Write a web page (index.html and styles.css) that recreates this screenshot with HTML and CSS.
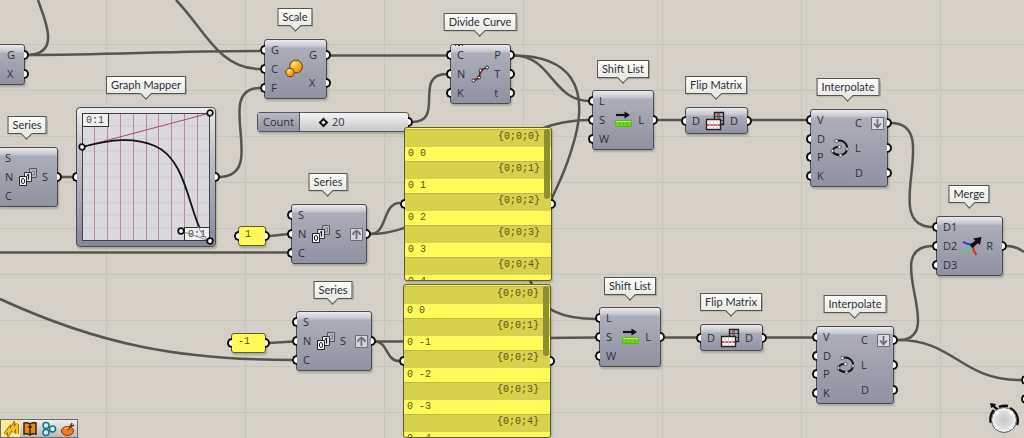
FILE: index.html
```html
<!DOCTYPE html>
<html lang="en">
<head>
<meta charset="utf-8">
<title>Node graph</title>
<link rel="stylesheet" href="styles.css">
</head>
<body>
<svg class="defs" width="0" height="0" aria-hidden="true">
  <defs>
    <symbol id="i-series" viewBox="0 0 20 20">
      <g fill="#b9b9c2" stroke="#55565e"><path d="M11.5 1.5h7v9h-7z"/><path d="M13.500 4h3v4h-3" fill="none" stroke="#777882"/></g>
      <path d="M6.500 5.500h7v9h-7z" fill="#e4e4e8" stroke="#33343a"/><path d="M9 8.500l1.500-1v5" fill="none" stroke="#222" stroke-width="1.200"/>
      <path d="M1.500 9.500h7v9h-7z" fill="#fff" stroke="#222"/><ellipse cx="5" cy="14" rx="1.600" ry="2.600" fill="none" stroke="#222"/>
    </symbol>
    <symbol id="i-scale" viewBox="0 0 20 20">
      <radialGradient id="ball" cx=".35" cy=".3" r=".8"><stop offset="0" stop-color="#fff3b0"/><stop offset=".35" stop-color="#fbb62e"/><stop offset="1" stop-color="#f08a00"/></radialGradient>
      <circle cx="12" cy="7.500" r="6.400" fill="url(#ball)" stroke="#6b3c10"/>
      <circle cx="6" cy="13.500" r="4.200" fill="url(#ball)" stroke="#6b3c10"/>
    </symbol>
    <symbol id="i-divide" viewBox="0 0 20 20">
      <path d="M4 16Q9 15.500 10 10T17 4" fill="none" stroke="#b01830" stroke-width="2"/>
      <path d="M4 16l5-3 1-7 7-2.500" fill="none" stroke="#333"/>
      <g fill="#fff" stroke="#222"><circle cx="3.500" cy="16.500" r="1.500"/><circle cx="9" cy="13.500" r="1.500"/><circle cx="10.500" cy="6.500" r="1.500"/><circle cx="17" cy="3.500" r="1.500"/></g>
    </symbol>
    <symbol id="i-shift" viewBox="0 0 20 20">
      <path d="M2 5h10" stroke="#111" stroke-width="2.200"/><path d="M10.500 1.500l5.500 3.500-5.500 3.500z" fill="#111"/>
      <path d="M1.500 10.500h16v6h-16z" fill="#6fd21c" stroke="#5cb81a"/><path d="M2 11.500h15" stroke="#b4f06a"/><path d="M5.500 12v4M9.500 12v4M13.500 12v4" stroke="#5cb81a"/>
    </symbol>
    <symbol id="i-flip" viewBox="0 0 20 20">
      <path d="M9.500 1.500h9v12h-9z" fill="#aaaab4" stroke="#222" stroke-width="1.400"/><path d="M14 2v11M10 5.500h8M10 9.500h8" stroke="#444"/><path d="M12.500 3v4" stroke="#c03040"/>
      <path d="M1.500 8.500h14v10h-14z" fill="#fff" stroke="#222" stroke-width="1.400"/><path d="M5 9v9M8.500 9v9M12 9v9" stroke="#c8c8ce"/><path d="M2 14h13" stroke="#d02c3c" stroke-width="1.600" stroke-dasharray="2.500 1"/>
    </symbol>
    <symbol id="i-interp" viewBox="0 0 20 20">
      <path d="M6.500 3C13 1 18 6 17 11.500S8 19.500 2.500 14C2 11 5 8.500 9.500 9" fill="none" stroke="#151515" stroke-width="2"/>
      <g fill="#fff" stroke="#444" stroke-width=".8"><circle cx="6.500" cy="3" r="1.600"/><circle cx="17" cy="11" r="1.400"/><circle cx="10.500" cy="17.500" r="1.400"/><circle cx="2.500" cy="13" r="1.400"/><circle cx="9.500" cy="9" r="1.600"/></g>
    </symbol>
    <symbol id="i-merge" viewBox="0 0 20 20">
      <path d="M1 6Q6 9 10.500 8" fill="none" stroke="#2438d8" stroke-width="2"/>
      <path d="M2 14Q6 12.500 10 9.500" fill="none" stroke="#42c8d0" stroke-width="1.800"/>
      <path d="M7 17.500Q7 13 11 9.500" fill="none" stroke="#7bc043" stroke-width="1.800"/>
      <path d="M14.500 19Q10.500 14 11.500 9" fill="none" stroke="#e03424" stroke-width="2.200"/>
      <path d="M9 10.500l6-5" stroke="#111" stroke-width="3.800"/><path d="M11 2.500L19.500 1l-1.500 8z" fill="#111"/>
    </symbol>
    <symbol id="i-up" viewBox="0 0 13 13"><path d="M.5.5h12v12H.5z" fill="#d4d4d8" stroke="#6c6d76"/><path d="M6.500 11V3M3 7q0-2.500 3.500-4.500Q10 4.500 10 7" fill="none" stroke="#6c6d76" stroke-width="1.800"/></symbol>
    <symbol id="i-down" viewBox="0 0 13 13"><path d="M.5.5h12v12H.5z" fill="#dcdce0" stroke="#6c6d76"/><path d="M6.500 2v8M3 6.500l3.500 3.800L10 6.500" fill="none" stroke="#6c6d76" stroke-width="1.800"/></symbol>
  </defs>
</svg>

<main class="canvas">
  <svg class="wires" aria-hidden="true">
    <path d="M38 0C44 18 62 54 28 55"/>
    <path d="M28 55C110 55 170 51 260 51"/>
    <path d="M176 0C203 27 218 69 260 69"/>
    <path d="M219 177C270 177 212 88 260 88"/>
    <path d="M61 177H73"/>
    <path d="M0 252.500H288"/>
    <path d="M0 299C100 345 180 360 293 360"/>
    <path d="M330 55.500H447"/>
    <path d="M412 122C446 122 412 74 447 74"/>
    <path d="M514 55.500C552 56 552 101 590 101"/>
    <path d="M514 55.500C572 56 588 88 575 138C566 170 560 180 549 205C528 250 524 268 532 285C540 310 562 319 597 319"/>
    <path d="M370 234C460 234 480 120 590 120"/>
    <path d="M370 234C388 234 382 203 400 203"/>
    <path d="M270 236L288 234"/>
    <path d="M269 343L293 341.500"/>
    <path d="M375 341.500C460 341.500 520 337.500 597 337.500"/>
    <path d="M375 341.500C388 342 386 361 399 361"/>
    <path d="M658 120H683M751 120H807"/>
    <path d="M665 337.500H697M766 337.500H813"/>
    <path d="M891 123C944 123 878 227 933 227"/>
    <path d="M898 340C950 340 878 246 933 246"/>
    <path d="M898 340C955 340 960 380 1021 380"/>
    <path d="M1007 246Q1016 246 1024 252"/>
  </svg>

  <h2 class="tag t-mapper">Graph Mapper</h2>
  <h2 class="tag t-series-a">Series</h2>
  <h2 class="tag t-scale">Scale</h2>
  <h2 class="tag t-divide">Divide Curve</h2>
  <h2 class="tag t-series-b">Series</h2>
  <h2 class="tag t-series-c">Series</h2>
  <h2 class="tag t-shift-a">Shift List</h2>
  <h2 class="tag t-shift-b">Shift List</h2>
  <h2 class="tag t-flip-a">Flip Matrix</h2>
  <h2 class="tag t-flip-b">Flip Matrix</h2>
  <h2 class="tag t-interp-a">Interpolate</h2>
  <h2 class="tag t-interp-b">Interpolate</h2>
  <h2 class="tag t-merge">Merge</h2>

  <section class="node n-edge">
    <ul class="out"><li>G</li><li>X</li></ul>
  </section>

  <section class="node n-series-a">
    <ul class="in"><li>S</li><li>N</li><li>C</li></ul>
    <svg class="icon"><use href="#i-series"/></svg>
    <ul class="out"><li>S</li></ul>
  </section>

  <section class="mapper">
    <span class="grip left"></span><span class="grip right"></span>
    <svg class="plot" viewBox="0 0 128 128" role="img" aria-label="Graph from 0 to 1">
      <rect width="128" height="128" fill="#d9d9df"/>
      <path d="M0 13h128M0 26h128M0 38h128M0 51h128M0 64h128M0 77h128M0 90h128M0 102h128M0 115h128" stroke="#cbcbd2"/>
      <path d="M12.500 0v128M25.500 0v128M38.500 0v128M51.500 0v128M64.500 0v128M76.500 0v128M89.500 0v128M102.500 0v128M115.500 0v128" stroke="#bd8d93"/>
      <path d="M0 34L128 0" stroke="#b04860" fill="none"/>
      <rect x=".5" y=".5" width="127" height="127" fill="none" stroke="#444"/>
      <path d="M0 34C30 26 52 24 73 33C102 45 106 90 118 116" fill="none" stroke="#111" stroke-width="1.800"/>
      <rect x=".5" y=".5" width="26" height="13" fill="#f0f0f0" stroke="#333"/>
      <rect x="102.500" y="114.500" width="25" height="13" fill="#f0f0f0" stroke="#333"/>
      <text x="4" y="10">0:1</text><text x="106" y="124">0:1</text>
      <path d="M99 118L128 128M116 113Q120 123 128 128" stroke="#888" fill="none"/>
      <g fill="#fff" stroke="#111" stroke-width="1.800"><circle cx="128" cy="0" r="2.800"/><circle cx="0" cy="34" r="2.800"/><circle cx="99" cy="118" r="2.800"/><circle cx="128" cy="128" r="2.800"/></g>
    </svg>
  </section>

  <section class="node n-scale">
    <ul class="in"><li>G</li><li>C</li><li>F</li></ul>
    <svg class="icon"><use href="#i-scale"/></svg>
    <ul class="out"><li>G</li><li>X</li></ul>
  </section>

  <section class="node n-divide">
    <svg class="notch" viewBox="0 0 8 3"><path d="M0 3l2-2 2 2 2-2 2 2" fill="none" stroke="#333"/></svg>
    <ul class="in"><li>C</li><li>N</li><li>K</li></ul>
    <svg class="icon"><use href="#i-divide"/></svg>
    <ul class="out"><li>P</li><li>T</li><li>t</li></ul>
  </section>

  <section class="slider">
    <label for="count">Count</label>
    <div class="track">
      <input id="count" type="range" min="0" max="100" value="20">
      <output for="count">20</output>
    </div>
    <span class="grip right"></span>
  </section>

  <section class="node n-series-b">
    <ul class="in"><li>S</li><li>N</li><li>C</li></ul>
    <svg class="icon"><use href="#i-series"/></svg>
    <ul class="out wide"><li>S<svg class="mod"><use href="#i-up"/></svg></li></ul>
  </section>

  <section class="node n-series-c">
    <ul class="in"><li>S</li><li>N</li><li>C</li></ul>
    <svg class="icon"><use href="#i-series"/></svg>
    <ul class="out wide"><li>S<svg class="mod"><use href="#i-up"/></svg></li></ul>
  </section>

  <div class="value v-one"><span class="grip left"></span>1<span class="grip right"></span></div>
  <div class="value v-minus"><span class="grip left"></span>-1<span class="grip right"></span></div>

  <section class="panel p-top">
    <span class="grip left"></span><span class="grip right"></span>
    <dl>
      <dt>{0;0;0}</dt><dd>0 0</dd>
      <dt>{0;0;1}</dt><dd>0 1</dd>
      <dt>{0;0;2}</dt><dd>0 2</dd>
      <dt>{0;0;3}</dt><dd>0 3</dd>
      <dt>{0;0;4}</dt><dd>0 4</dd>
    </dl>
    <span class="thumb"></span>
  </section>

  <section class="panel p-bottom">
    <span class="grip left"></span><span class="grip right"></span>
    <dl>
      <dt>{0;0;0}</dt><dd>0 0</dd>
      <dt>{0;0;1}</dt><dd>0 -1</dd>
      <dt>{0;0;2}</dt><dd>0 -2</dd>
      <dt>{0;0;3}</dt><dd>0 -3</dd>
      <dt>{0;0;4}</dt><dd>0 -4</dd>
    </dl>
    <span class="thumb"></span>
  </section>

  <section class="node n-shift-a">
    <ul class="in"><li>L</li><li>S</li><li>W</li></ul>
    <svg class="icon"><use href="#i-shift"/></svg>
    <ul class="out"><li>L</li></ul>
  </section>
  <section class="node n-shift-b">
    <ul class="in"><li>L</li><li>S</li><li>W</li></ul>
    <svg class="icon"><use href="#i-shift"/></svg>
    <ul class="out"><li>L</li></ul>
  </section>

  <section class="node n-flip-a">
    <ul class="in"><li>D</li></ul>
    <svg class="icon"><use href="#i-flip"/></svg>
    <ul class="out"><li>D</li></ul>
  </section>
  <section class="node n-flip-b">
    <ul class="in"><li>D</li></ul>
    <svg class="icon"><use href="#i-flip"/></svg>
    <ul class="out"><li>D</li></ul>
  </section>

  <section class="node n-interp-a">
    <ul class="in"><li>V</li><li>D</li><li>P</li><li>K</li></ul>
    <svg class="icon"><use href="#i-interp"/></svg>
    <ul class="out wide"><li>C<svg class="mod"><use href="#i-down"/></svg></li><li>L</li><li>D</li></ul>
  </section>
  <section class="node n-interp-b">
    <ul class="in"><li>V</li><li>D</li><li>P</li><li>K</li></ul>
    <svg class="icon"><use href="#i-interp"/></svg>
    <ul class="out wide"><li>C<svg class="mod"><use href="#i-down"/></svg></li><li>L</li><li>D</li></ul>
  </section>

  <section class="node n-merge">
    <ul class="in"><li>D1</li><li>D2</li><li>D3</li></ul>
    <svg class="icon"><use href="#i-merge"/></svg>
    <ul class="out"><li>R</li></ul>
  </section>

  <section class="node n-next"><ul class="in"><li></li><li></li></ul></section>

  <nav class="toolbar" aria-label="Canvas tools">
    <button type="button" class="active" aria-label="Sketch"><svg viewBox="0 0 16 16"><path d="M2 13l4-5 0 4 4-7 0 6 4-8v10" fill="none" stroke="#8a5a00" stroke-width="3.500"/><path d="M2 13l4-5 0 4 4-7 0 6 4-8v10" fill="none" stroke="#ffc21c" stroke-width="2"/></svg></button>
    <button type="button" aria-label="Library"><svg viewBox="0 0 16 16"><path d="M2 2q3-1 6 1 3-2 6-1v11q-3-1-6 1-3-2-6-1z" fill="#e88a1a" stroke="#3a220c" stroke-width="1.500"/><path d="M8 4v9M6 6h4" stroke="#3a220c" stroke-width="1.500"/></svg></button>
    <button type="button" aria-label="Clusters"><svg viewBox="0 0 16 16"><g fill="#d4eef4" stroke="#1c7488" stroke-width="1.500"><circle cx="5" cy="4.500" r="3"/><circle cx="5" cy="11.500" r="3"/><circle cx="11.500" cy="8" r="3"/></g></svg></button>
    <button type="button" aria-label="Bake"><svg viewBox="0 0 16 16"><ellipse cx="7.500" cy="10" rx="6" ry="4.500" fill="#f07c1c" stroke="#7a3208"/><path d="M8 9l4-7M10 6l4-2" stroke="#7a3208" stroke-width="1.500"/><path d="M4 8q3-2 5-1" stroke="#ffd08c" fill="none"/></svg></button>
  </nav>

  <svg class="compass" viewBox="0 0 32 34" aria-hidden="true">
    <radialGradient id="dial"><stop offset="0" stop-color="#c9c9c9"/><stop offset=".7" stop-color="#dedede"/><stop offset="1" stop-color="#fafafa"/></radialGradient>
    <path d="M3 22A14 14 0 0 1 6 9M11 6A14 14 0 0 1 20 5M22 7A14 14 0 0 1 29 24" fill="none" stroke="#111" stroke-width="2.500"/>
    <path d="M2 2l6 1-1 2 4 3-3 1-3-3-2 1z" fill="#111"/>
    <circle cx="16" cy="19" r="12.500" fill="url(#dial)" stroke="#555"/>
    <g fill="#fff"><path d="M7 10l5 1-4 4zM25 10l-1 5-4-4zM7 28l1-5 4 4zM25 28l-5-1 4-4z"/></g>
  </svg>
</main>
</body>
</html>
```
FILE: styles.css
```css
*, *::before, *::after { box-sizing: border-box; }
body { margin: 0; font-family: "Open Sans", "Noto Sans", sans-serif; font-size: 11px; color: #2f3036; }
ul, dl, dd, h2 { margin: 0; padding: 0; list-style: none; }
.defs { position: absolute; }

.canvas {
  position: relative;
  min-height: 100vh;
  overflow: hidden;
  background-color: #d4d0c8;
  background-image:
    linear-gradient(90deg, #c6c4bb 1px, transparent 1px),
    linear-gradient(#c6c4bb 1px, transparent 1px);
  background-size: 139px 46px, 139px 46px;
  background-position: 106px 0, 0 44px;
}
.wires { position: absolute; inset: 0; width: 100%; height: 100%; }
.wires path { fill: none; stroke: #57544d; stroke-width: 2.5; }

/* Name tags above components */
.tag {
  position: absolute;
  transform: translateX(-50%);
  padding: 0 4px;
  border: 1px solid #55554f;
  background: linear-gradient(#fdfdfb, #e9e9e5);
  box-shadow: 1px 1px 1px #0003;
  font-family: Lato, "Open Sans", sans-serif;
  font-size: 11px;
  font-weight: 400;
  line-height: 16px;
  white-space: nowrap;
}
.tag::after {
  content: "";
  position: absolute;
  left: 50%;
  bottom: -5px;
  width: 8px;
  height: 8px;
  margin-left: -4px;
  border: solid #55554f;
  border-width: 0 1px 1px 0;
  background: #e9e9e5;
  transform: rotate(45deg);
}
.t-mapper { left: 146px; top: 76px; }
.t-series-a { left: 27px; top: 116px; }
.t-scale { left: 295px; top: 8px; }
.t-divide { left: 480px; top: 13px; }
.t-series-b { left: 328px; top: 173px; }
.t-series-c { left: 333px; top: 281px; }
.t-shift-a { left: 623px; top: 60px; }
.t-shift-b { left: 630px; top: 277px; }
.t-flip-a { left: 716px; top: 76px; }
.t-flip-b { left: 731px; top: 293px; }
.t-interp-a { left: 848px; top: 78px; }
.t-interp-b { left: 855px; top: 295px; }
.t-merge { left: 969px; top: 185px; }

/* Components */
.node {
  position: absolute;
  display: flex;
  align-items: stretch;
  justify-content: space-between;
  height: 60px;
  padding: 1px 0;
  border: 1px solid #4a4b52;
  border-radius: 3px;
  background: linear-gradient(#ececee, #c2c2c9 7px, #acadb8 8px, #9092a2);
  box-shadow: 1px 2px 2px #0003;
}
.node ul { display: flex; flex-direction: column; }
.node li { position: relative; display: flex; flex: 1; align-items: center; line-height: 14px; }
.in li { padding-left: 6px; }
.out li { padding-right: 9px; }
.out.wide li { gap: 9px; padding-right: 3px; }
.icon { align-self: center; flex: none; width: 20px; height: 20px; }
.mod { width: 13px; height: 13px; }
.notch { position: absolute; left: 4px; top: -2px; width: 8px; height: 3px; }

.in li::before, .out li::after, .grip {
  content: "";
  position: absolute;
  top: 50%;
  width: 5px;
  height: 10px;
  margin-top: -5px;
  border: 2px solid #111;
  background: #fff;
}
.in li::before, .grip.left { right: 100%; border-right: 0; border-radius: 5px 0 0 5px; }
.out li::after, .grip.right { left: 100%; border-left: 0; border-radius: 0 5px 5px 0; }

.n-edge { left: -40px; top: 44px; width: 65px; height: 41px; justify-content: flex-end; }
.n-series-a { left: -2px; top: 147px; width: 60px; }
.n-scale { left: 264px; top: 39px; width: 63px; }
.n-divide { left: 450px; top: 44px; width: 61px; }
.n-series-b { left: 291px; top: 204px; width: 76px; }
.n-series-c { left: 296px; top: 311px; width: 76px; }
.n-shift-a { left: 592px; top: 90px; width: 62px; }
.n-shift-b { left: 599px; top: 307px; width: 62px; }
.n-flip-a { left: 685px; top: 107px; width: 63px; height: 27px; }
.n-flip-b { left: 700px; top: 324px; width: 63px; height: 27px; }
.n-interp-a { left: 810px; top: 109px; width: 78px; height: 78px; }
.n-interp-b { left: 816px; top: 326px; width: 78px; height: 78px; }
.n-merge { left: 936px; top: 216px; width: 67px; }
.n-next { left: 1025px; top: 369px; width: 60px; height: 41px; }

/* Graph mapper */
.mapper {
  position: absolute;
  left: 76px;
  top: 107px;
  padding: 5px;
  border: 1px solid #4a4b52;
  border-radius: 4px;
  background: linear-gradient(#ededef, #c9c9cf 25%, #85869a);
  box-shadow: 1px 2px 2px #0003;
}
.plot { display: block; width: 128px; height: 128px; overflow: visible; }
.plot text { font: 10px "Liberation Mono", monospace; fill: #444; }

/* Number slider */
.slider {
  position: absolute;
  left: 257px;
  top: 112px;
  display: flex;
  width: 152px;
  height: 20px;
  border: 1px solid #55565c;
  border-radius: 3px;
  background: linear-gradient(#f4f4f4, #c8c8cc);
  box-shadow: 1px 2px 2px #0003;
}
.slider label {
  padding: 0 5px;
  border-right: 1px solid #55565c;
  background: linear-gradient(#b8b9c2, #9092a2);
  line-height: 18px;
}
.track { position: relative; display: flex; flex: 1; padding-right: 3px; }
.track input { width: 100%; margin: 0; appearance: none; background: none; }
.track input::-webkit-slider-thumb {
  appearance: none;
  box-sizing: border-box;
  width: 7px;
  height: 7px;
  border: 2px solid #111;
  background: #fff;
  transform: rotate(45deg);
}
.track output { position: absolute; left: 32px; line-height: 18px; }

/* Yellow data panels */
.value, .panel {
  position: absolute;
  border: 1px solid #5f5d2c;
  border-radius: 3px;
  background: #fffa58;
  box-shadow: 1px 2px 2px #0003;
  color: #55531c;
  font: 10px "Liberation Mono", monospace;
}
.value { height: 20px; padding-left: 6px; line-height: 16px; }
.v-one { left: 238px; top: 226px; width: 28px; }
.v-minus { left: 231px; top: 333px; width: 35px; }
.panel { width: 148px; height: 154px; padding-top: 1px; }
.p-top { left: 404px; top: 127px; }
.p-bottom { left: 403px; top: 284px; }
.panel dl { height: 100%; overflow: hidden; }
.panel dt {
  height: 18px;
  padding-right: 11px;
  border-top: 1px solid #bdba44;
  background: #d6d24b;
  line-height: 13px;
  text-align: right;
}
.panel dd { height: 14px; padding-left: 3px; line-height: 13px; }
.thumb {
  position: absolute;
  top: 1px;
  right: 1px;
  width: 6px;
  height: 70px;
  border-radius: 3px;
  background: #8f8c34;
}

/* Corner widgets */
.toolbar {
  position: absolute;
  left: 0;
  bottom: 0;
  display: flex;
  height: 19px;
  border: 1px solid #6c6c68;
  background: linear-gradient(#eeeeee, #b9b9b9);
}
.toolbar button { display: grid; place-items: center; width: 19px; padding: 0; border: 0; background: none; }
.toolbar .active { background: #ffe9a0; }
.toolbar svg { width: 16px; height: 16px; }
.compass { position: absolute; right: 4px; bottom: 3px; width: 32px; height: 34px; }
```
